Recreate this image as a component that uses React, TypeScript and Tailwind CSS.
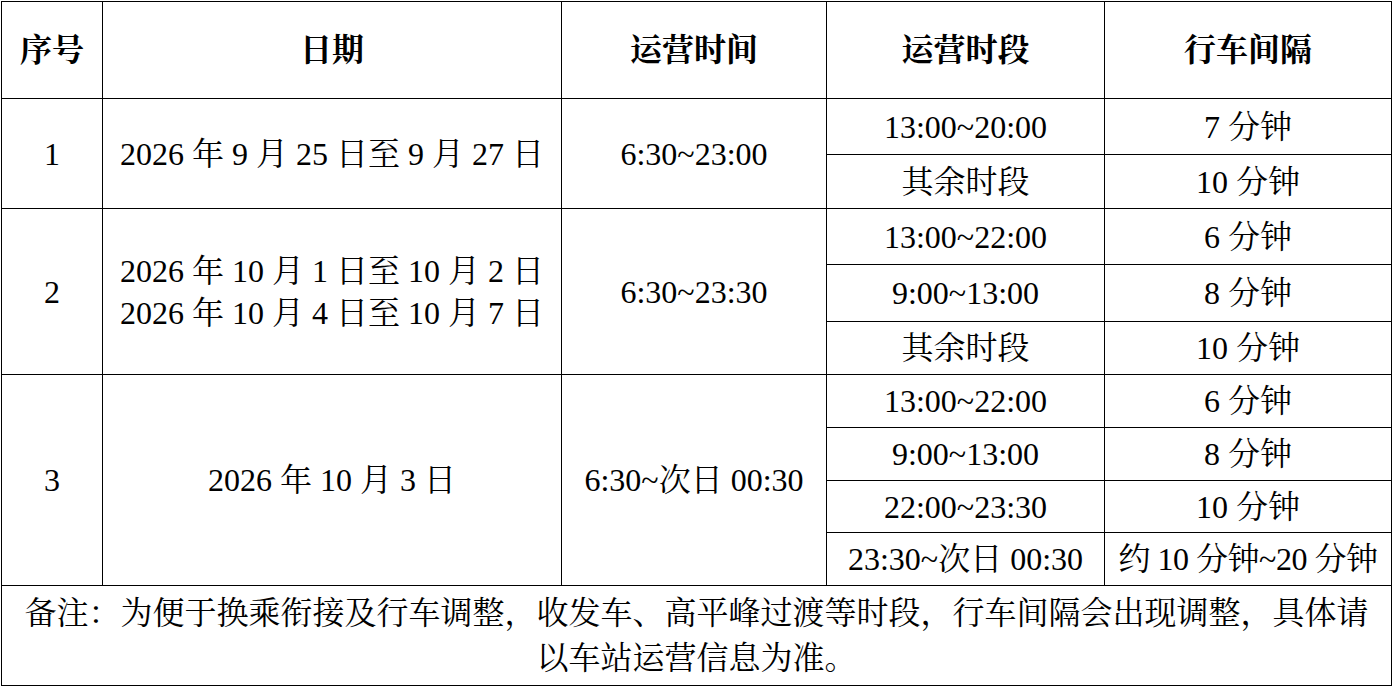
import React from 'react';

const cell = 'bg-white flex items-center justify-center text-center text-black';

const App: React.FC = () => {
    return (
        <div className="min-h-screen bg-white p-px text-[32px] leading-[42px] font-['Liberation_Serif','Noto_Serif_CJK_SC','Noto_Sans_CJK_SC',serif]">
            <div className="grid w-[1391px] gap-px bg-black border border-black grid-cols-[100px_458px_264px_277px_286px] grid-rows-[96px_55px_53px_55px_56px_52px_52px_52px_51px_52px_99px]">
                {/* header */}
                <div className={`${cell} font-bold`}>序号</div>
                <div className={`${cell} font-bold`}>日期</div>
                <div className={`${cell} font-bold`}>运营时间</div>
                <div className={`${cell} font-bold`}>运营时段</div>
                <div className={`${cell} font-bold`}>行车间隔</div>

                {/* 1 */}
                <div className={`${cell} row-span-2`}>1</div>
                <div className={`${cell} row-span-2`}>2026 年 9 月 25 日至 9 月 27 日</div>
                <div className={`${cell} row-span-2`}>6:30~23:00</div>
                <div className={cell}>13:00~20:00</div>
                <div className={cell}>7 分钟</div>
                <div className={cell}>其余时段</div>
                <div className={cell}>10 分钟</div>

                {/* 2 */}
                <div className={`${cell} row-span-3`}>2</div>
                <div className={`${cell} row-span-3 flex-col`}>
                    <span>2026 年 10 月 1 日至 10 月 2 日</span>
                    <span>2026 年 10 月 4 日至 10 月 7 日</span>
                </div>
                <div className={`${cell} row-span-3`}>6:30~23:30</div>
                <div className={cell}>13:00~22:00</div>
                <div className={cell}>6 分钟</div>
                <div className={cell}>9:00~13:00</div>
                <div className={cell}>8 分钟</div>
                <div className={cell}>其余时段</div>
                <div className={cell}>10 分钟</div>

                {/* 3 */}
                <div className={`${cell} row-span-4`}>3</div>
                <div className={`${cell} row-span-4`}>2026 年 10 月 3 日</div>
                <div className={`${cell} row-span-4`}>6:30~次日 00:30</div>
                <div className={cell}>13:00~22:00</div>
                <div className={cell}>6 分钟</div>
                <div className={cell}>9:00~13:00</div>
                <div className={cell}>8 分钟</div>
                <div className={cell}>22:00~23:30</div>
                <div className={cell}>10 分钟</div>
                <div className={cell}>23:30~次日 00:30</div>
                <div className={`${cell} whitespace-nowrap tracking-[-0.5px]`}>约 10 分钟~20 分钟</div>

                {/* note */}
                <div className={`${cell} col-span-5 px-[20px] leading-[45px]`}>
                    备注：为便于换乘衔接及行车调整，收发车、高平峰过渡等时段，行车间隔会出现调整，具体请以车站运营信息为准。
                </div>
            </div>
        </div>
    );
};

export default App;
